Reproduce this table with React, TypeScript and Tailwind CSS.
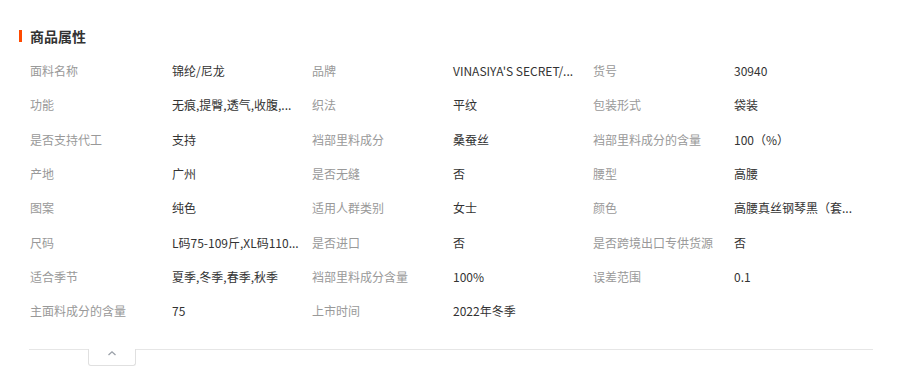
import React from "react";

const rows: [string, string, string, string, string, string][] = [
  ["面料名称", "锦纶/尼龙", "品牌", "VINASIYA'S SECRET/...", "货号", "30940"],
  ["功能", "无痕,提臀,透气,收腹,...", "织法", "平纹", "包装形式", "袋装"],
  ["是否支持代工", "支持", "裆部里料成分", "桑蚕丝", "裆部里料成分的含量", "100（%）"],
  ["产地", "广州", "是否无缝", "否", "腰型", "高腰"],
  ["图案", "纯色", "适用人群类别", "女士", "颜色", "高腰真丝钢琴黑（套..."],
  ["尺码", "L码75-109斤,XL码110...", "是否进口", "否", "是否跨境出口专供货源", "否"],
  ["适合季节", "夏季,冬季,春季,秋季", "裆部里料成分含量", "100%", "误差范围", "0.1"],
  ["主面料成分的含量", "75", "上市时间", "2022年冬季", "", ""],
];

export default function App() {
  return (
    <div
      className="w-[901px] h-[379px] bg-white pt-[27px]"
      style={{ fontFamily: '"Noto Sans CJK SC", "Liberation Sans", sans-serif' }}
    >
      <div className="flex items-center pl-[19px] h-[18px]">
        <div className="w-[3px] h-[12px] bg-[#ff4a00]" />
        <div className="ml-[8px] text-[14px] leading-[18px] font-bold text-[#333]">商品属性</div>
      </div>
      <div className="ml-[30px] mt-[9px] w-[846px]">
        {rows.map((r, i) => (
          <div key={i} className="grid grid-cols-[142px_140px_141px_140px_141px_142px] h-[34.3px] items-center text-[12px] leading-[18px]">
            {r.map((c, j) => (
              <div
                key={j}
                className={
                  j % 2 === 0
                    ? "text-[#999] whitespace-nowrap"
                    : "text-[#333] whitespace-nowrap"
                }
              >
                {c}
              </div>
            ))}
          </div>
        ))}
      </div>
      <div className="flex ml-[29px] w-[844px] mt-[21px]">
        <div className="w-[59px] border-t border-[#e6e6e6]" />
        <div className="w-[48px] h-[17px] border-l border-r border-b border-[#e0e0e0] rounded-b-[3px] flex items-start justify-center pt-[1px]">
          <svg width="10" height="7" viewBox="0 0 10 7">
            <path d="M1.5 5 L5 1.8 L8.5 5" fill="none" stroke="#9aa0a8" strokeWidth="1.3" />
          </svg>
        </div>
        <div className="flex-1 border-t border-[#e6e6e6]" />
      </div>
    </div>
  );
}
